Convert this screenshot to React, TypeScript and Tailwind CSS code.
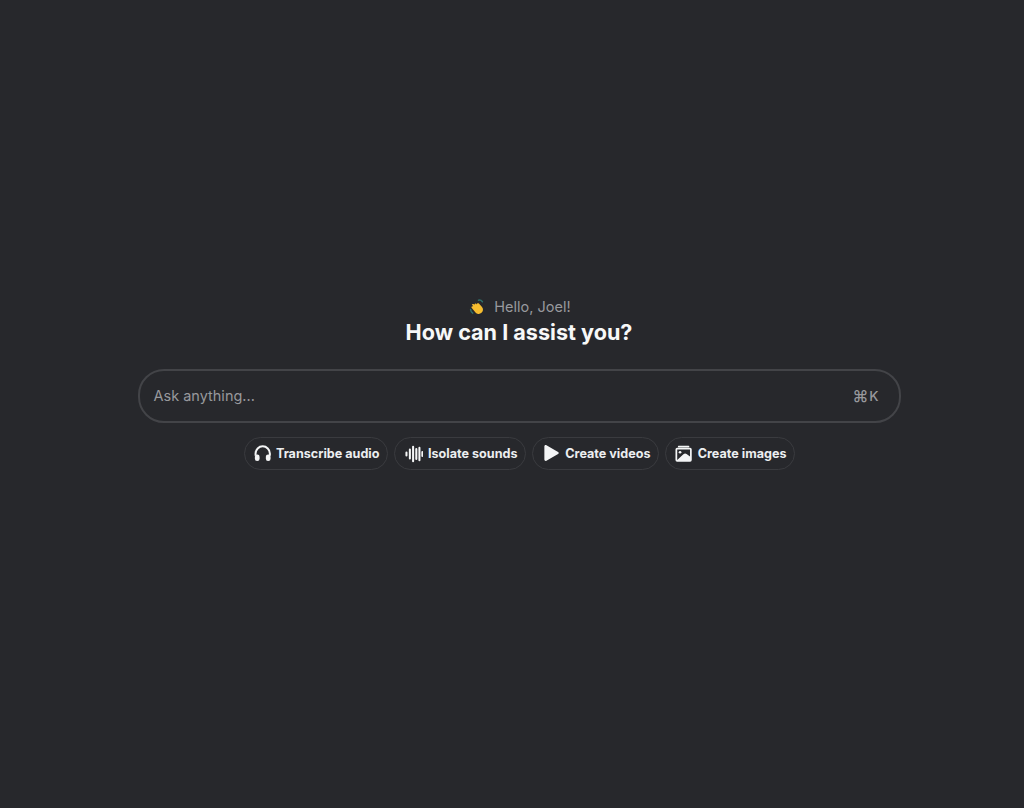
const chipClass =
  "flex h-[33px] items-center rounded-full border border-[#3a3b3f] pr-[7px] text-[12.6px] font-bold text-[#eceef0]";

function HeadphonesIcon() {
  return (
    <svg width="19" height="19" viewBox="0 0 20 20" fill="none">
      <path d="M1.800 12.500V10a8.200 8.200 0 0 1 16.400 0v2.500" stroke="#f4f5f6" strokeWidth="2.300" />
      <rect x="1" y="11.200" width="5.400" height="7.400" rx="2.500" fill="#f4f5f6" />
      <rect x="13.600" y="11.200" width="5.400" height="7.400" rx="2.500" fill="#f4f5f6" />
    </svg>
  );
}

function WaveIcon() {
  return (
    <svg width="19" height="18" viewBox="0 0 19 18" fill="none" stroke="#f4f5f6" strokeWidth="2.100" strokeLinecap="round">
      <path d="M1.500 7.500v3M5 4.500v9M8.300 1.500v15M11.600 4v10M14.800 2.500v13M17.800 7v4" />
    </svg>
  );
}

function PlayIcon() {
  return (
    <svg width="18" height="18" viewBox="0 1 18 18">
      <path d="M2.400 2.400c0-1.200 1.100-1.800 2.100-1.200L16.300 8c.9.500.9 1.600 0 2.100L4.500 16.800c-1 .6-2.100 0-2.100-1.200z" fill="#f4f5f6" />
    </svg>
  );
}

function ImagesIcon() {
  return (
    <svg width="18" height="18" viewBox="0 1 18 18" fill="none">
      <rect x="3" y="1.500" width="12" height="1.600" rx="0.800" fill="#f4f5f6" />
      <path d="M2.200 3.500h13.600A1.700 1.700 0 0 1 17.500 5.200v11.100a1.700 1.700 0 0 1-1.700 1.700H2.200A1.700 1.700 0 0 1 .5 16.300V5.200A1.700 1.700 0 0 1 2.200 3.500z" fill="#f4f5f6" />
      <rect x="2.300" y="5.300" width="13.400" height="10.900" fill="#27282c" />
      <circle cx="5.300" cy="8.200" r="1.400" fill="#f4f5f6" />
      <path d="M2.300 16.200 8.800 10.200c1.200-1 2.300-1 3.300-.2l3.600 2.600v3.600z" fill="#f4f5f6" />
    </svg>
  );
}

function WaveHand() {
  return (
    <svg width="16" height="16" viewBox="0 0 16 16" fill="none">
      <path d="M9.500 1.200c1.500-.3 3 .3 3.900 1.600M1.600 10.500c.1 1.500.8 2.800 2.100 3.600" stroke="#2f6f6a" strokeWidth="1.500" strokeLinecap="round" />
      <path d="M3 5.300c.5-.5 1.300-.5 1.800 0l.7.700c-.4-1 .8-2.100 1.800-1.200l.6.600c-.2-1.100 1.100-1.700 2-.9l2.900 3.200c1.800 2 1.500 4.600-.3 6.100-1.800 1.600-4.300 1.400-6-.4L2.800 9c-1-1.100.4-2.400 1.400-1.500z" fill="#f6bd2f" />
    </svg>
  );
}

export default function App() {
  const chips = [
    { label: "Transcribe audio", icon: <HeadphonesIcon />, box: "w-[144px] gap-[5px] pl-[9px]" },
    { label: "Isolate sounds", icon: <WaveIcon />, box: "w-[132px] gap-[5px] pl-[10px]" },
    { label: "Create videos", icon: <PlayIcon />, box: "w-[127px] gap-[6px] pl-[9px]" },
    { label: "Create images", icon: <ImagesIcon />, box: "w-[130px] gap-[6px] pl-[9px]" },
  ];

  return (
    <div className="flex h-[808px] w-full flex-col items-center justify-center bg-[#27282c] pb-[42px] pl-[14px] font-['Inter',sans-serif]">
      <div className="ml-[2px] flex items-center gap-[9px] text-[14.5px] leading-[22px] text-[#98999d]">
        <WaveHand />
        <span>Hello, Joel!</span>
      </div>
      <h1 className="mt-[-1px] text-[21.6px] leading-[30px] font-bold text-[#f7f8f8]">
        How can I assist you?
      </h1>
      <div className="mt-[22px] flex h-[54px] w-[763px] items-center justify-between rounded-[26px] border-2 border-[#434448] pl-[14px] pr-[20px] text-[14.5px] text-[#98999d]">
        <span>Ask anything...</span>
        <span className="flex items-center gap-[1px] text-[13.5px] font-medium leading-[20px]">
          <span className="text-[16px]">⌘</span>
          <span>K</span>
        </span>
      </div>
      <div className="mt-[14px] flex gap-[6px]">
        {chips.map((chip) => (
          <div key={chip.label} className={`${chipClass} ${chip.box}`}>
            {chip.icon}
            <span className="whitespace-nowrap pt-[2px]">{chip.label}</span>
          </div>
        ))}
      </div>
    </div>
  );
}
